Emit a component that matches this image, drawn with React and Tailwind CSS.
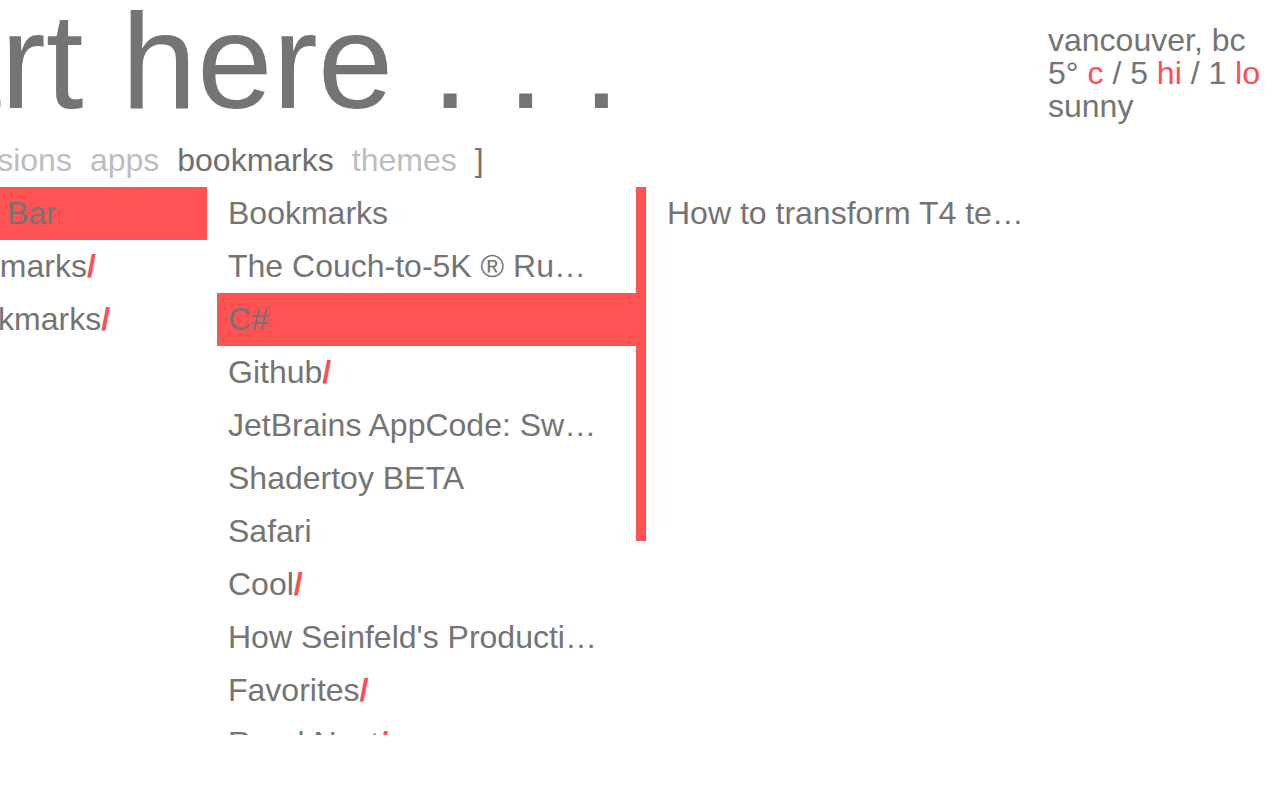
import React from 'react';

const NAV = [
  { label: 'extensions', active: false },
  { label: 'apps', active: false },
  { label: 'bookmarks', active: true },
  { label: 'themes', active: false },
];

const FOLDERS = [
  { title: 'Bookmarks Bar', folder: false, selected: true },
  { title: 'Other Bookmarks', folder: true },
  { title: 'Mobile Bookmarks', folder: true },
];

const ITEMS = [
  { title: 'Bookmarks' },
  { title: 'The Couch-to-5K ® Running Plan | Cool Running' },
  { title: 'C#', selected: true },
  { title: 'Github', folder: true },
  { title: 'JetBrains AppCode: Swift and Objective-C IDE' },
  { title: 'Shadertoy BETA' },
  { title: 'Safari' },
  { title: 'Cool', folder: true },
  { title: "How Seinfeld's Productivity Secret Fooled the Internet" },
  { title: 'Favorites', folder: true },
  { title: 'Read Next', folder: true },
  { title: 'Hacker News' },
  { title: 'Design', folder: true },
  { title: 'Music', folder: true },
  { title: 'Dribbble' },
  { title: 'Reading List', folder: true },
];

const DETAILS = [{ title: 'How to transform T4 templates on build' }];

function Row({ item, width }) {
  return (
    <div
      className={
        'h-[53px] leading-[53px] pl-[11px] ' +
        (item.selected ? 'bg-[#ff5253]' : '')
      }
    >
      <div className={'truncate ' + width}>
        {item.title}
        {item.folder && <span className="text-[#ff4d52] font-bold">/</span>}
      </div>
    </div>
  );
}

export default function App() {
  return (
    <div
      className="w-full h-screen overflow-hidden bg-white text-[#747474]"
      style={{ fontFamily: '"Liberation Sans", Arial, sans-serif' }}
    >
      {/* header: big title + weather */}
      <div className="flex items-start">
        <h1 className="flex-1 min-w-0 ml-[-181px] whitespace-nowrap text-[136px] leading-[122px] font-normal">
          start here . . .
        </h1>
        <div className="w-[232px] shrink-0 pt-[24px] text-[32px] leading-[33px]">
          <p>vancouver, bc</p>
          <p>
            5° <span className="text-[#ff4d52]">c</span> / 5{' '}
            <span className="text-[#ff4d52]">hi</span> / 1{' '}
            <span className="text-[#ff4d52]">lo</span>
          </p>
          <p>sunny</p>
        </div>
      </div>

      {/* tabs */}
      <nav className="ml-[-108px] mt-[17px] h-[40px] flex gap-[18px] text-[32px] leading-[40px] whitespace-nowrap">
        <span>[</span>
        {NAV.map((n) => (
          <span key={n.label} className={n.active ? 'text-[#6f6f6f]' : 'text-[#bdbdbd]'}>
            {n.label}
          </span>
        ))}
        <span>]</span>
      </nav>

      {/* columns */}
      <div className="ml-[-173px] mt-[7px] flex items-start text-[32px]">
        <div className="w-[380px] shrink-0">
          {FOLDERS.map((f) => (
            <Row key={f.title} item={f} width="w-[360px]" />
          ))}
        </div>

        <div className="ml-[10px] flex shrink-0">
          <div className="w-[419px] h-[548px] overflow-hidden">
            {ITEMS.map((it) => (
              <Row key={it.title} item={it} width="w-[372px]" />
            ))}
          </div>
          <div className="w-[10px] h-[548px]">
            <div className="h-[354px] bg-[#ff5253]" />
          </div>
        </div>

        <div className="ml-[10px] w-[400px] shrink-0">
          {DETAILS.map((d) => (
            <Row key={d.title} item={d} width="w-[372px]" />
          ))}
        </div>
      </div>
    </div>
  );
}
